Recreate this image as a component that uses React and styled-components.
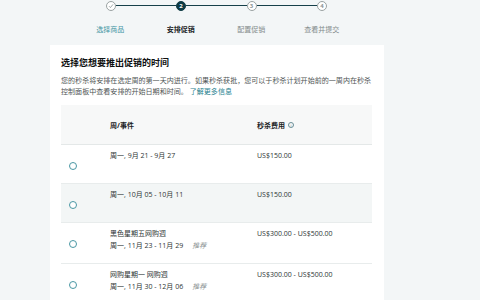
import React from "react";
import styled, { createGlobalStyle } from "styled-components";

const steps = [
	{ label: "选择商品", state: "done" },
	{ label: "安排促销", state: "active" },
	{ label: "配置促销", state: "todo" },
	{ label: "查看并提交", state: "todo" },
];

const rows = [
	{ event: "", dates: "周一, 9月 21 - 9月 27", fee: "US$150.00", alt: false },
	{ event: "", dates: "周一, 10月 05 - 10月 11", fee: "US$150.00", alt: true },
	{
		event: "黑色星期五网购週",
		dates: "周一, 11月 23 - 11月 29",
		fee: "US$300.00 - US$500.00",
		tag: "推荐",
		alt: false,
	},
	{
		event: "网购星期一 网购週",
		dates: "周一, 11月 30 - 12月 06",
		fee: "US$300.00 - US$500.00",
		tag: "推荐",
		alt: false,
	},
];

const App = () => {
	return (
		<Page>
			<GlobalStyle />
			<Stepper>
				<Track>
					{steps.map((s, i) => (
						<React.Fragment key={s.label}>
							<Dot $state={s.state}>
								{s.state === "done" ? (
									<svg width="6" height="6" viewBox="0 0 6 6">
										<path
											d="M1 3.2 L2.4 4.6 L5 1.4"
											fill="none"
											stroke="#8c9494"
											strokeWidth="0.8"
										/>
									</svg>
								) : (
									i + 1
								)}
							</Dot>
							{i < steps.length - 1 && <Line />}
						</React.Fragment>
					))}
				</Track>
				<Labels>
					{steps.map((s) => (
						<StepLabel key={s.label} $state={s.state}>
							{s.label}
						</StepLabel>
					))}
				</Labels>
			</Stepper>

			<Card>
				<Title>选择您想要推出促销的时间</Title>
				<Intro>
					您的秒杀将安排在选定周的第一天内进行。如果秒杀获批，您可以于秒杀计划开始前的一周内在秒杀
					<br />
					控制面板中查看安排的开始日期和时间。 <MoreLink>了解更多信息</MoreLink>
				</Intro>

				<Table>
					<HeadRow>
						<span />
						<HeadCell>周/事件</HeadCell>
						<HeadCell>
							秒杀费用
							<InfoIcon>i</InfoIcon>
						</HeadCell>
					</HeadRow>
					{rows.map((r) => (
						<Row key={r.dates} $alt={r.alt}>
							<Radio />
							<Cell>
								{r.event && <div>{r.event}</div>}
								<div>
									{r.dates}
									{r.tag && <Tag>{r.tag}</Tag>}
								</div>
							</Cell>
							<Fee>{r.fee}</Fee>
						</Row>
					))}
				</Table>
			</Card>
		</Page>
	);
};

export default App;

const GlobalStyle = createGlobalStyle`
	html, body {
		margin: 0;
		padding: 0;
		background: #f3f6f7;
		font-family: "Open Sans", "Noto Sans CJK SC", sans-serif;
	}
`;

const Page = styled.div`
	width: 480px;
	height: 300px;
	overflow: hidden;
	padding-top: 0.5px;
	box-sizing: border-box;
`;

const Stepper = styled.div`
	margin-left: 75px;
	width: 283px;
`;

const Track = styled.div`
	display: flex;
	align-items: center;
	padding-left: 30.5px;
`;

const Dot = styled.div`
	width: 10px;
	height: 10px;
	box-sizing: border-box;
	border-radius: 50%;
	flex-shrink: 0;
	display: flex;
	align-items: center;
	justify-content: center;
	font-size: 6px;
	font-weight: 700;
	line-height: 1;
	border: 1px solid
		${(p) => (p.$state === "active" ? "#0f3b45" : "#9aa2a2")};
	background: ${(p) => (p.$state === "active" ? "#0f3b45" : "#ffffff")};
	color: ${(p) => (p.$state === "active" ? "#ffffff" : "#8c9494")};
`;

const Line = styled.div`
	width: 60.5px;
	height: 1.5px;
	background: #16404a;
`;

const Labels = styled.div`
	display: grid;
	grid-template-columns: repeat(4, 70.5px);
	margin-top: 13.5px;
`;

const StepLabel = styled.div`
	text-align: center;
	font-size: 7px;
	line-height: 11px;
	font-weight: ${(p) => (p.$state === "active" ? 700 : 400)};
	color: ${(p) =>
		p.$state === "done"
			? "#3f95a3"
			: p.$state === "active"
			? "#1a2224"
			: "#848c8c"};
`;

const Card = styled.div`
	margin-top: 10px;
	margin-left: 50px;
	width: 334px;
	height: 260px;
	background: #ffffff;
	padding: 12px 12px 0 11px;
	box-sizing: border-box;
`;

const Title = styled.div`
	font-size: 9px;
	line-height: 12px;
	font-weight: 700;
	color: #0f1111;
`;

const Intro = styled.p`
	margin: 5.5px 0 0;
	font-size: 7.05px;
	line-height: 11px;
	color: #4f5555;
	white-space: nowrap;
`;

const MoreLink = styled.span`
	color: #1f7f8f;
`;

const Table = styled.div`
	margin-top: 8.5px;
	width: 311px;
`;

const HeadRow = styled.div`
	display: grid;
	grid-template-columns: 49px 147px 1fr;
	align-items: center;
	height: 39px;
	background: #f7f8f8;
	border-bottom: 1px solid #e4e8e8;
`;

const HeadCell = styled.div`
	display: flex;
	align-items: center;
	gap: 3px;
	font-size: 7px;
	font-weight: 700;
	color: #1a2224;
`;

const InfoIcon = styled.span`
	width: 6px;
	height: 6px;
	box-sizing: border-box;
	border: 0.7px solid #6a8e96;
	border-radius: 50%;
	font-size: 4px;
	line-height: 5px;
	text-align: center;
	font-weight: 400;
	color: #6a8e96;
`;

const Row = styled.div`
	display: grid;
	grid-template-columns: 49px 147px 1fr;
	min-height: 39px;
	padding: 5px 0 11px;
	box-sizing: border-box;
	background: ${(p) => (p.$alt ? "#f3f6f6" : "#ffffff")};
	border-bottom: 1px solid #e8ecec;
`;

const Radio = styled.span`
	width: 8px;
	height: 8px;
	box-sizing: border-box;
	border: 1px solid #4a97a4;
	border-radius: 50%;
	margin: 12px 0 0 8px;
	background: #ffffff;
`;

const Cell = styled.div`
	font-size: 7px;
	line-height: 12px;
	color: #2d3434;
`;

const Tag = styled.em`
	margin-left: 9px;
	color: #8a9292;
	font-style: italic;
`;

const Fee = styled.div`
	font-size: 7px;
	line-height: 12px;
	color: #2d3434;
`;
